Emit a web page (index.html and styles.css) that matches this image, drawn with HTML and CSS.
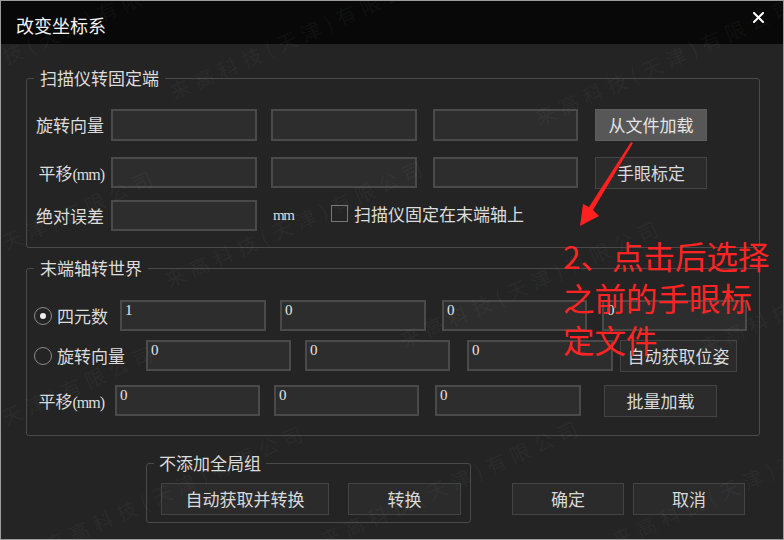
FILE: index.html
```html
<!DOCTYPE html>
<html lang="zh-CN">
<head>
<meta charset="utf-8">
<title>改变坐标系</title>
<link rel="stylesheet" href="styles.css">
</head>
<body>
<div class="window">
  <div class="titlebar">
    <span class="title">改变坐标系</span>
    <svg class="close" width="11" height="11" viewBox="0 0 11 11"><path d="M1 1 L10 10 M10 1 L1 10" stroke="#ffffff" stroke-width="2" stroke-linecap="square"/></svg>
  </div>

  <div class="content">
    <fieldset class="group g1">
      <legend>扫描仪转固定端</legend>
      <div class="row">
        <span class="lbl lbl-g1">旋转向量</span>
        <div class="field w146"></div>
        <div class="field w146 ml14"></div>
        <div class="field w145 ml16"></div>
        <button class="btn btn-hot w112 ml17">从文件加载</button>
      </div>
      <div class="row mt16">
        <span class="lbl lbl-g1">平移<span class="latin">(mm)</span></span>
        <div class="field w146"></div>
        <div class="field w146 ml14"></div>
        <div class="field w145 ml16"></div>
        <button class="btn w112 ml17">手眼标定</button>
      </div>
      <div class="row mt10">
        <span class="lbl lbl-g1">绝对误差</span>
        <div class="field w146"></div>
        <span class="unit">mm</span>
        <span class="check"></span>
        <span class="check-text">扫描仪固定在末端轴上</span>
      </div>
    </fieldset>

    <fieldset class="group g2">
      <legend>末端轴转世界</legend>
      <div class="row">
        <span class="opt opt-a"><span class="radio on"></span><span class="opt-text">四元数</span></span>
        <div class="field w146">1</div>
        <div class="field w146 ml14">0</div>
        <div class="field w145 ml16">0</div>
        <div class="field w145 ml15">0</div>
      </div>
      <div class="row mt9">
        <span class="opt opt-b"><span class="radio"></span><span class="opt-text">旋转向量</span></span>
        <div class="field w145">0</div>
        <div class="field w145 ml14">0</div>
        <div class="field w146 ml17">0</div>
        <button class="btn w117 ml7">自动获取位姿</button>
      </div>
      <div class="row mt13">
        <span class="lbl lbl-c">平移<span class="latin">(mm)</span></span>
        <div class="field w145">0</div>
        <div class="field w145 ml14">0</div>
        <div class="field w146 ml16">0</div>
        <button class="btn w113 ml23">批量加载</button>
      </div>
    </fieldset>

    <div class="bottom">
      <fieldset class="group g3">
        <legend>不添加全局组</legend>
        <div class="row">
          <button class="btn w168 ml14">自动获取并转换</button>
          <button class="btn w113 ml19">转换</button>
        </div>
      </fieldset>
      <button class="btn w112 ml41 foot">确定</button>
      <button class="btn w112 ml9 foot">取消</button>
    </div>
  </div>

  <div class="watermark" aria-hidden="true">
    <span class="wm wm0">来高科技(天津)有限公司</span>
    <span class="wm wm1">来高科技(天津)有限公司</span>
    <span class="wm wm2">来高科技(天津)有限公司</span>
    <span class="wm wm3">来高科技(天津)有限公司</span>
    <span class="wm wm4">来高科技(天津)有限公司</span>
    <span class="wm wm5">来高科技(天津)有限公司</span>
    <span class="wm wm6">来高科技(天津)有限公司</span>
    <span class="wm wm7">来高科技(天津)有限公司</span>
    <span class="wm wm8">来高科技(天津)有限公司</span>
    <span class="wm wm9">来高科技(天津)有限公司</span>
    <span class="wm wm10">来高科技(天津)有限公司</span>
  </div>

  <svg class="arrow" width="784" height="540" viewBox="0 0 784 540">
    <polygon points="630,141 632,142 592,209 598,215 579,225 582,203 588,206" fill="#ff2020"/>
  </svg>
  <div class="note">2、点击后选择<br>之前的手眼标<br>定文件</div>
</div>
</body>
</html>
```

FILE: styles.css
```css
* { box-sizing: border-box; }

body {
  margin: 0;
  background: #242424;
  font-family: "Liberation Serif", "Noto Sans CJK SC", serif;
}

.window {
  position: relative;
  width: 784px;
  height: 540px;
  border: 1px solid #9c9c9c;
  background: #242424;
  color: #dcdcdc;
  font-size: 17px;
  overflow: hidden;
}

.titlebar {
  height: 43px;
  background: #080808;
  display: flex;
  align-items: flex-start;
  justify-content: space-between;
  padding: 0 19px 0 15px;
}

.title {
  margin-top: 12px;
  font-family: "Noto Sans CJK SC", sans-serif;
  font-size: 18px;
  line-height: 24px;
  color: #f2f2f2;
}

.close { margin-top: 11px; }

.content { display: flex; flex-direction: column; align-items: flex-start; }

.group {
  margin: 0;
  border: 1px solid #4a4a4a;
  border-radius: 3px;
  min-inline-size: 0;
}

.group legend {
  margin-left: 7px;
  padding: 0 6px;
  font-family: "Noto Sans CJK SC", sans-serif;
  font-size: 17px;
  line-height: 24px;
  color: #dcdcdc;
}

.g1 { margin: 22px 0 0 25px; width: 734px; padding: 19px 0 16px 0; }
.g2 { margin: 8px 0 0 25px; width: 734px; padding: 20px 0 17px 0; }

.row { display: flex; align-items: flex-start; }

.mt9 { margin-top: 9px; }
.mt10 { margin-top: 10px; }
.mt13 { margin-top: 13px; }
.mt16 { margin-top: 16px; }

.lbl {
  text-align: right;
  font-family: "Noto Sans CJK SC", sans-serif;
  line-height: 31px;
  white-space: nowrap;
}
.lbl-g1 { width: 84px; padding-right: 7px; }
.lbl-c { width: 88px; padding-right: 11px; }

.latin {
  font-family: "Liberation Serif", serif;
  font-size: 16px;
  letter-spacing: -1px;
}

.field {
  height: 31px;
  border: 2px solid #4a4a4a;
  background: #2d2d2d;
  padding: 0 0 0 3px;
  font-family: "Liberation Serif", serif;
  font-size: 15px;
  line-height: 17px;
  color: #e6e6e6;
}
.g1 .row:first-child .field, .g1 .row:nth-child(2) .field { height: 32px; }

.w112 { width: 112px; }
.w113 { width: 113px; }
.w117 { width: 117px; }
.w145 { width: 145px; }
.w146 { width: 146px; }
.w168 { width: 168px; }

.ml7 { margin-left: 7px; }
.ml9 { margin-left: 9px; }
.ml14 { margin-left: 14px; }
.ml15 { margin-left: 15px; }
.ml16 { margin-left: 16px; }
.ml17 { margin-left: 17px; }
.ml19 { margin-left: 19px; }
.ml23 { margin-left: 23px; }
.ml41 { margin-left: 41px; }

.btn {
  height: 32px;
  margin-top: 0;
  margin-bottom: 0;
  padding: 0;
  border: 1px solid #444444;
  background: #2b2b2b;
  color: #dadada;
  font-family: "Noto Sans CJK SC", sans-serif;
  font-size: 17px;
  line-height: 28px;
}
.btn-hot { background: #575757; border-color: #5e5e5e; color: #e4e4e4; }

.unit {
  width: 74px;
  padding-left: 16px;
  font-family: "Liberation Serif", serif;
  font-size: 15px;
  letter-spacing: -1.5px;
  line-height: 31px;
}

.check {
  width: 17px;
  height: 17px;
  margin-top: 5px;
  border: 1px solid #777777;
}
.check-text {
  margin-left: 6px;
  font-family: "Noto Sans CJK SC", sans-serif;
  line-height: 28px;
}

.opt {
  display: flex;
  align-items: center;
  height: 31px;
  padding-left: 7px;
  font-family: "Noto Sans CJK SC", sans-serif;
}
.opt-a { width: 93px; }
.opt-b { width: 119px; }
.opt-text { margin-left: 5px; }

.radio {
  width: 18px;
  height: 18px;
  border: 1px solid #8a8a8a;
  border-radius: 50%;
  display: flex;
  align-items: center;
  justify-content: center;
}
.radio.on::after {
  content: "";
  width: 6px;
  height: 6px;
  border-radius: 50%;
  background: #f0f0f0;
}

.bottom { display: flex; align-items: flex-end; margin-top: 15px; }
.g3 { margin: 0 0 0 145px; width: 325px; padding: 8px 0 7px 0; }
.g3 legend { padding: 0 5px; }
.foot { margin-bottom: 8px; }

.watermark {
  position: absolute;
  inset: 0;
  pointer-events: none;
}
.wm {
  position: absolute;
  white-space: nowrap;
  font-family: "Noto Sans CJK SC", sans-serif;
  font-size: 20px;
  line-height: 24px;
  letter-spacing: 6px;
  color: rgba(255, 255, 255, 0.05);
  transform: rotate(-24deg);
  transform-origin: 0 50%;
}
.wm0 { left: -69px; top: 76px; }
.wm1 { left: 170px; top: 80px; }
.wm2 { left: 535px; top: 106px; }
.wm3 { left: -105px; top: 278px; }
.wm4 { left: 165px; top: 268px; }
.wm5 { left: 400px; top: 328px; }
.wm6 { left: -105px; top: 453px; }
.wm7 { left: 700px; top: 335px; }
.wm8 { left: 45px; top: 533px; }
.wm9 { left: 320px; top: 528px; }
.wm10 { left: 612px; top: 528px; }

.arrow { position: absolute; left: 0; top: 0; pointer-events: none; }

.note {
  position: absolute;
  left: 562px;
  top: 233px;
  font-family: "Noto Sans CJK SC", sans-serif;
  font-size: 31.5px;
  line-height: 42px;
  color: #ff2424;
  white-space: nowrap;
}
```
